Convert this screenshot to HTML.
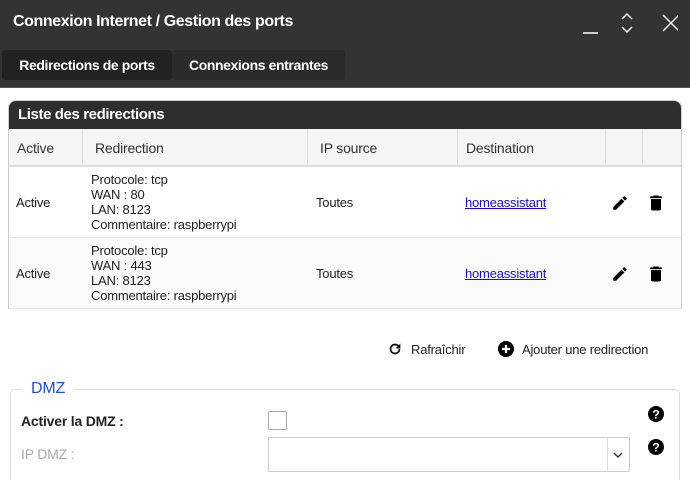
<!DOCTYPE html>
<html><head><meta charset="utf-8"><style>
*{box-sizing:border-box;margin:0;padding:0}
html,body{width:690px;height:480px;overflow:hidden}
body{background:#fff;font-family:"Liberation Sans",sans-serif;color:#222;position:relative;letter-spacing:-0.2px}
.top{position:absolute;left:0;top:0;width:690px;height:88px;background:#333;border-bottom:1px solid #555}
.title{position:absolute;left:13px;top:13px;color:#fff;font-size:16px;font-weight:bold;letter-spacing:-0.4px}
.tab{position:absolute;top:50px;height:30px;line-height:30px;color:#fff;font-size:14px;font-weight:bold;text-align:center;border-radius:3px;letter-spacing:-0.4px}
.panel{position:absolute;left:8px;top:100px;width:674px;height:209px;border:1px solid #ccc;border-bottom:none;border-radius:8px 8px 0 0;overflow:hidden}
.ph{height:28px;background:#2e2e2e;color:#fff;font-size:15px;font-weight:bold;padding:5px 0 0 9px;letter-spacing:-0.4px}
.th{position:absolute;top:28px;height:38px;background:#f5f5f5;border-right:1px solid #ddd;font-size:14px;line-height:38px;padding-left:8px;color:#333;border-bottom:2px solid #ddd}
.row{position:absolute;left:0;width:674px;height:71px;border-bottom:1px solid #e6e6e6;font-size:13px}
.c{position:absolute;top:0;height:70px;display:flex;align-items:center}
a{color:#1a0dcc;text-decoration:underline}
.btn{position:absolute;top:341px;font-size:13px;display:flex;align-items:center;gap:8px}
.fs{position:absolute;left:10px;top:389px;width:670px;height:100px;border:1px solid #ddd;border-radius:5px}
</style></head><body>
<div class="top">
<div class="title">Connexion Internet / Gestion des ports</div>
<svg style="position:absolute;left:578px;top:12px" width="100" height="24" fill="none" stroke="#fff" stroke-width="1.5">
<line x1="5" y1="21" x2="20" y2="21"/>
<polyline points="44,7 49,2 54,7"/><polyline points="44,15 49,20 54,15"/>
<line x1="85" y1="3" x2="101" y2="19"/><line x1="101" y1="3" x2="85" y2="19"/>
</svg>
<div class="tab" style="left:2px;width:170px;background:#222">Redirections de ports</div>
<div class="tab" style="left:172px;width:173px;background:#2b2b2b">Connexions entrantes</div>
</div>
<div class="panel">
<div class="ph">Liste des redirections</div>
<div class="th" style="left:0;width:74px">Active</div>
<div class="th" style="left:74px;width:225px;padding-left:12px">Redirection</div>
<div class="th" style="left:299px;width:150px;padding-left:12px">IP source</div>
<div class="th" style="left:449px;width:148px">Destination</div>
<div class="th" style="left:597px;width:37px"></div>
<div class="th" style="left:634px;width:40px;border-right:none"></div>
<div class="row" style="top:66px;background:#fff">
<div class="c" style="left:7px">Active</div>
<div class="c" style="left:82px;line-height:15px">Protocole: tcp<br>WAN : 80<br>LAN: 8123<br>Commentaire: raspberrypi</div>
<div class="c" style="left:307px">Toutes</div>
<div class="c" style="left:456px"><a>homeassistant</a></div>
<svg class="c" style="left:602px;top:27px;height:18px" width="18" height="18" viewBox="0 0 24 24"><path d="M3 17.25V21h3.75L17.81 9.94l-3.75-3.75L3 17.25zM20.71 7.04a1 1 0 000-1.41l-2.34-2.34a1 1 0 00-1.41 0l-1.83 1.83 3.75 3.75 1.83-1.83z"/></svg>
<svg class="c" style="left:637px;top:26px;height:20px" width="20" height="20" viewBox="0 0 24 24"><path d="M6 19c0 1.1.9 2 2 2h8c1.1 0 2-.9 2-2V7H6v12zM19 4h-3.5l-1-1h-5l-1 1H5v2h14V4z"/></svg>
</div>
<div class="row" style="top:137px;background:#fafafa">
<div class="c" style="left:7px">Active</div>
<div class="c" style="left:82px;line-height:15px">Protocole: tcp<br>WAN : 443<br>LAN: 8123<br>Commentaire: raspberrypi</div>
<div class="c" style="left:307px">Toutes</div>
<div class="c" style="left:456px"><a>homeassistant</a></div>
<svg class="c" style="left:602px;top:27px;height:18px" width="18" height="18" viewBox="0 0 24 24"><path d="M3 17.25V21h3.75L17.81 9.94l-3.75-3.75L3 17.25zM20.71 7.04a1 1 0 000-1.41l-2.34-2.34a1 1 0 00-1.41 0l-1.83 1.83 3.75 3.75 1.83-1.83z"/></svg>
<svg class="c" style="left:637px;top:26px;height:20px" width="20" height="20" viewBox="0 0 24 24"><path d="M6 19c0 1.1.9 2 2 2h8c1.1 0 2-.9 2-2V7H6v12zM19 4h-3.5l-1-1h-5l-1 1H5v2h14V4z"/></svg>
</div>
</div>
<div class="btn" style="left:387px"><svg width="16" height="16" viewBox="0 0 24 24"><path d="M17.65 6.35A7.96 7.96 0 0012 4a8 8 0 108 8h-2.5A5.5 5.5 0 1112 6.5c1.5 0 2.9.6 3.9 1.6L13 11h7V4l-2.35 2.35z"/></svg>Rafraîchir</div>
<div class="btn" style="left:498px"><svg width="16" height="16" viewBox="0 0 16 16"><circle cx="8" cy="8" r="8"/><path d="M8 4v8M4 8h8" stroke="#fff" stroke-width="2.2"/></svg>Ajouter une redirection</div>
<div class="fs"></div>
<div style="position:absolute;left:22px;top:380px;background:#fff;padding:0 9px;color:#1a4fd6;font-size:16px">DMZ</div>
<div style="position:absolute;left:21px;top:413px;font-size:14px;font-weight:bold;color:#222">Activer la DMZ :</div>
<div style="position:absolute;left:268px;top:411px;width:19px;height:19px;border:1px solid #aaa;border-radius:2px"></div>
<div style="position:absolute;left:21px;top:446px;font-size:14px;color:#aaa">IP DMZ :</div>
<div style="position:absolute;left:268px;top:437px;width:362px;height:35px;border:1px solid #ccc;border-radius:2px"><div style="position:absolute;right:0;top:0;width:22px;height:33px;border-left:1px solid #ddd"></div><svg style="position:absolute;right:6px;top:14px" width="10" height="7"><polyline points="1,1 5,5 9,1" fill="none" stroke="#333" stroke-width="1.4"/></svg></div>
<svg style="position:absolute;left:648px;top:406px" width="16" height="16" viewBox="0 0 16 16"><circle cx="8" cy="8" r="8"/><text x="8" y="12.5" text-anchor="middle" fill="#fff" font-size="12" font-weight="bold" font-family="Liberation Sans">?</text></svg>
<svg style="position:absolute;left:648px;top:439px" width="16" height="16" viewBox="0 0 16 16"><circle cx="8" cy="8" r="8"/><text x="8" y="12.5" text-anchor="middle" fill="#fff" font-size="12" font-weight="bold" font-family="Liberation Sans">?</text></svg>
</body></html>
